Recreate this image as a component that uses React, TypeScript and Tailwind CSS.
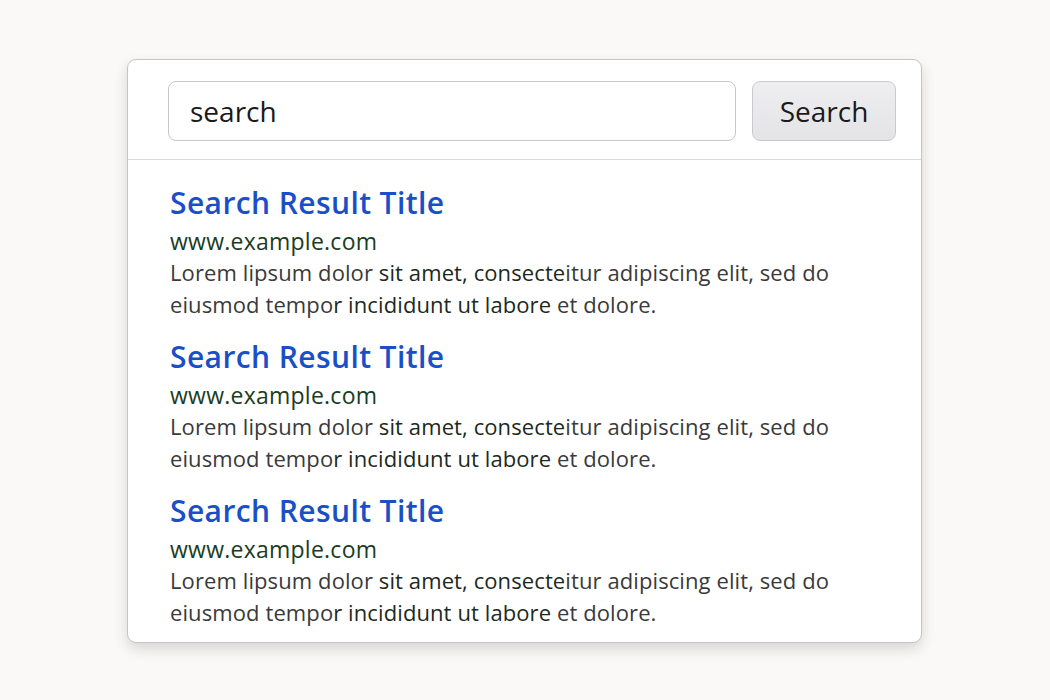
import React from "react";

function Result() {
  return (
    <div className="flex flex-col">
      <a className="text-[30px] leading-[36px] font-semibold text-[#1a4fc8] tracking-[0.4px]">Search Result Title</a>
      <div className="mt-[5px] text-[23px] leading-[30px] text-[#1b3d1e] tracking-[0.25px]">www.example.com</div>
      <p className="text-[22px] leading-[32px] text-[#3a3a3a] tracking-[0.1px]">
        Lorem lipsum dolor <span className="text-[#1c2a1c]">sit amet, consecte</span>itur adipiscing elit, sed do
        <br />
        eiusmod tempo<span className="text-[#1c2a1c]">r incididunt ut labore</span> et dolore.
      </p>
    </div>
  );
}

export default function App() {
  return (
    <div className="min-h-[700px] w-full bg-[#faf9f7] pt-[59px]" style={{ fontFamily: "'Open Sans', 'Noto Sans', sans-serif" }}>
      <div className="ml-[127px] w-[795px] h-[584px] rounded-[9px] border border-[#c4c5ca] bg-white shadow-[0_6px_14px_rgba(0,0,0,0.14)] overflow-hidden">
        <div className="h-[100px] border-b border-[#d9dadd] flex items-start gap-[16px] pl-[40px] pr-[25px] pt-[21px]">
          <div className="flex-1 h-[60px] rounded-[8px] border border-[#c7c8cc] bg-white flex items-center pl-[21px] text-[28px] text-[#1a1a1a]">
            search
          </div>
          <button className="w-[144px] h-[60px] rounded-[8px] border border-[#c9cacd] bg-gradient-to-b from-[#eeeef0] to-[#e4e4e7] text-[28px] text-[#1a1a1a] flex items-center justify-center">
            Search
          </button>
        </div>
        <div className="pl-[42px] pt-[25px] flex flex-col gap-[19px]">
          <Result />
          <Result />
          <Result />
        </div>
      </div>
    </div>
  );
}
